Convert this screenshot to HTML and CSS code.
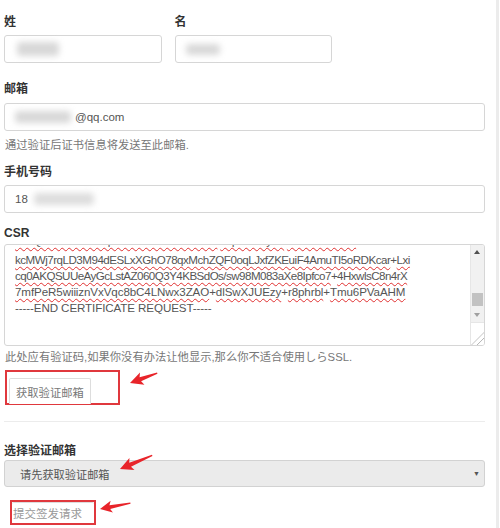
FILE: index.html
```html
<!DOCTYPE html>
<html lang="zh-CN">
<head>
  <meta charset="UTF-8" />
  <title>提交签发请求</title>
  <link rel="stylesheet" href="styles.css">
</head>
<body>

<div class="page">
  <form class="form">

    <!-- 姓名 -->
    <div class="name-row">
      <div class="field">
        <label class="field-label">姓</label>
        <div class="input"><span class="blur blur-last"></span></div>
      </div>
      <div class="field">
        <label class="field-label">名</label>
        <div class="input"><span class="blur blur-first"></span></div>
      </div>
    </div>

    <!-- 邮箱 -->
    <div class="field field-mail">
      <label class="field-label">邮箱</label>
      <div class="input"><span class="blur blur-mail"></span>@qq.com</div>
      <p class="help">通过验证后证书信息将发送至此邮箱.</p>
    </div>

    <!-- 手机号码 -->
    <div class="field field-phone">
      <label class="field-label">手机号码</label>
      <div class="input">18<span class="blur blur-phone"></span></div>
    </div>

    <!-- CSR -->
    <div class="field field-csr">
      <label class="field-label">CSR</label>
      <div class="textarea">
        <div class="csr-text">
          <div class="line cut"><span class="typo">Z9kQ1xWvY0rLmNpB2sT4uHc7dGfJ8aEo</span> <span class="typo">Rq3VbX6yKz</span> <span class="typo">Pw5MnLi0sDe</span></div>
          <div class="line"><span class="typo">kcMWj7rqLD3M94dESLxXGhO78qxMchZQF0oqLJxfZKEuiF4AmuTI5oRDKcar</span>+<span class="typo">Lxi</span></div>
          <div class="line line-2"><span class="typo">cq0AKQSUUeAyGcLstAZ060Q3Y4KBSdOs/sw98M083aXe8Ipfco7</span>+<span class="typo">4HxwlsC8n4rX</span></div>
          <div class="line line-3"><span class="typo">7mfPeR5wiiiznVxVqc8bC4LNwx3ZAO</span>+<span class="typo">dlSwXJUEzy</span>+<span class="typo">r8phrbl</span>+<span class="typo">Tmu6PVaAHM</span></div>
          <div class="line line-end">-----END CERTIFICATE REQUEST-----</div>
        </div>
        <div class="scrollbar">
          <span class="sb-up"></span>
          <span class="sb-track"><span class="sb-thumb"></span></span>
          <span class="sb-down"></span>
          <span class="sb-corner"></span>
        </div>
      </div>
      <p class="help help-csr">此处应有验证码,如果你没有办法让他显示,那么你不适合使用しらSSL.</p>
    </div>

    <div class="mark mark-get">
      <button type="button" class="btn">获取验证邮箱</button>
    </div>

    <hr class="divider">

    <!-- 选择验证邮箱 -->
    <div class="field field-select">
      <label class="field-label">选择验证邮箱</label>
      <div class="select">请先获取验证邮箱<span class="caret">▼</span></div>
    </div>

    <div class="mark mark-submit">
      <button type="button" class="btn btn-submit">提交签发请求</button>
    </div>
  </form>

  <!-- annotation arrows -->
  <svg class="arrows" width="496" height="528" viewBox="0 0 496 528">
    <path d="M0,0 L13,-6.5 L11,-2.2 L29,-0.6 L29,0.6 L11,2.2 L13,6.5 Z" transform="translate(130 383) rotate(-20)"/>
    <path d="M0,0 L13,-6.5 L11,-2.2 L35,-0.6 L35,0.6 L11,2.2 L13,6.5 Z" transform="translate(120 469) rotate(-23)"/>
    <path d="M0,0 L12,-6 L10,-2 L31,-0.6 L31,0.6 L10,2 L12,6 Z" transform="translate(100 509) rotate(-11)"/>
  </svg>
</div>

</body>
</html>
```

FILE: styles.css
```css
body {
  margin: 0;
  background: #fff;
  font-family: "Liberation Sans", Arial, "Noto Sans CJK SC", sans-serif;
  font-size: 12px;
  color: #333;
}

.page {
  position: relative;
  width: 496px;
  height: 528px;
  border-right: 3px solid #ececec;
  overflow: hidden;
}

.form {
  width: 481px;
  padding: 13px 0 0 4px;
}

.name-row {
  display: flex;
  gap: 13px;
  width: 328px;
}

.name-row .field {
  flex: 1;
}

.field-label {
  display: block;
  height: 18px;
  font-weight: bold;
  font-size: 12px;
  line-height: 18px;
  margin-bottom: 4px;
  color: #333;
}

.input {
  display: flex;
  align-items: center;
  height: 28px;
  box-sizing: border-box;
  padding: 0 10px;
  border: 1px solid #d6d6d6;
  border-radius: 3px;
  color: #555;
  font-size: 11.5px;
}

.blur {
  display: inline-block;
  background: #d8d8d8;
  filter: blur(3px);
  border-radius: 4px;
}

.blur-last { width: 42px; height: 14px; margin-left: 2px; }
.blur-first { width: 34px; height: 11px; margin-left: 0; }
.blur-mail { width: 56px; height: 12px; margin-right: 4px; }
.blur-phone { width: 60px; height: 12px; margin-left: 6px; background: #ddd; }

.help {
  height: 16px;
  margin: 6px 0 0 1px;
  font-size: 11.3px;
  line-height: 16px;
  color: #777;
}

.field-mail {
  margin-top: 17px;
}

.field-mail .field-label {
  margin-bottom: 5px;
}

.field-phone {
  margin-top: 10px;
}

.field-csr {
  margin-top: 11px;
}

.field-csr .field-label {
  margin-bottom: 2px;
}

.help-csr {
  margin-top: 3px;
}

.textarea {
  position: relative;
  height: 102px;
  box-sizing: border-box;
  border: 1px solid #d6d6d6;
  border-radius: 3px;
  overflow: hidden;
}

.csr-text {
  padding: 0 30px 0 10px;
  font-size: 11.6px;
  color: #555;
  white-space: nowrap;
  letter-spacing: -0.5px;
}

.line {
  height: 16px;
  line-height: 16px;
}

.line.cut {
  margin-top: -12px;
  margin-bottom: 3px;
}

.line-2 {
  letter-spacing: -0.55px;
}

.line-3 {
  letter-spacing: -0.1px;
}

.line-end {
  letter-spacing: -0.1px;
}

.typo {
  text-decoration: underline wavy #e03030;
  text-decoration-thickness: 1px;
  text-underline-offset: 2px;
}

.scrollbar {
  position: absolute;
  top: 0;
  right: 0;
  width: 13px;
  height: 100%;
  display: flex;
  flex-direction: column;
  background: #f1f1f1;
  border-left: 1px solid #e6e6e6;
}

.sb-up, .sb-down {
  height: 14px;
  position: relative;
}

.sb-up::after, .sb-down::after {
  content: "";
  position: absolute;
  left: 3px;
  border-left: 3.5px solid transparent;
  border-right: 3.5px solid transparent;
}

.sb-up::after {
  top: 5px;
  border-bottom: 4px solid #505050;
}

.sb-down::after {
  top: 5px;
  border-top: 4px solid #a0a0a0;
}

.sb-track {
  flex: 1;
  display: flex;
  flex-direction: column;
  justify-content: flex-end;
  padding: 0 1px 2px;
}

.sb-thumb {
  height: 13px;
  background: #c2c2c2;
}

.sb-corner {
  height: 22px;
  background: #fff linear-gradient(135deg, transparent 62%, #b8b8b8 64%, transparent 67%, transparent 78%, #b8b8b8 80%, transparent 83%);
  border-top: 1px solid #e6e6e6;
}

.mark {
  display: flex;
  border: 2px solid #e0383d;
  box-sizing: border-box;
}

.mark-get {
  margin: 5px 0 0 1px;
  width: 115px;
  height: 35px;
  padding: 6px 0 0 2px;
  align-items: flex-start;
}

.btn {
  height: 26px;
  padding: 0 6px;
  border: 1px solid #ddd;
  border-bottom: none;
  border-radius: 2px 2px 0 0;
  background: #fff;
  font-family: "Noto Sans CJK SC", sans-serif;
  font-size: 11.3px;
  color: #777;
}

.divider {
  margin: 16px 0 0;
  border: 0;
  border-top: 1px solid #ececec;
}

.field-select {
  margin-top: 20px;
}

.field-select .field-label {
  margin-bottom: 0;
}

.select {
  display: flex;
  align-items: center;
  height: 27px;
  box-sizing: border-box;
  padding: 0 15px;
  background: #ebebeb;
  border: 1px solid #d2d2d2;
  border-radius: 3px;
  color: #555;
  font-size: 11.2px;
}

.caret {
  margin-left: auto;
  margin-right: -11px;
  font-size: 7px;
  color: #555;
}

.mark-submit {
  margin: 13px 0 0 6px;
  width: 86px;
  height: 25px;
}

.btn-submit {
  height: 21px;
  width: 100%;
  padding: 0 0 0 1px;
  text-align: left;
  border: 0;
  border-top: 1px solid #ddd;
  font-size: 11.5px;
  color: #999;
}

.arrows {
  position: absolute;
  left: 0;
  top: 0;
  pointer-events: none;
}

.arrows path {
  fill: #e8242a;
}
```
